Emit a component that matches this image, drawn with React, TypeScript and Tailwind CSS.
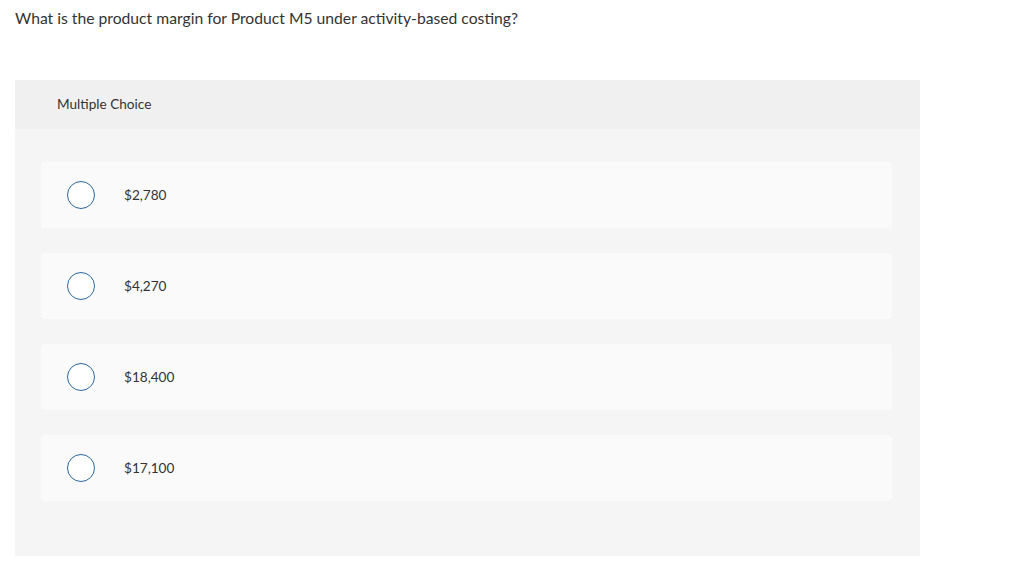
const options = ["$2,780", "$4,270", "$18,400", "$17,100"];

export default function App() {
  return (
    <div className="w-[1012px] h-[584px] bg-white font-['Lato','Open_Sans',sans-serif] text-[#333]">
      <div className="pl-[15px] pt-[8px] text-[15.7px] leading-[20px]">
        What is the product margin for Product M5 under activity-based costing?
      </div>

      <div className="ml-[15px] mt-[52px] w-[905px] h-[476px] bg-[#f5f5f5]">
        <div className="h-[49px] bg-[#f0f0f0] pl-[42px] flex items-center text-[13.6px]">
          Multiple Choice
        </div>
        <div className="pt-[33px] pl-[26px] pr-[28px] flex flex-col gap-[25px]">
          {options.map((opt) => (
            <div
              key={opt}
              className="h-[66px] bg-[#fafafa] rounded-[4px] flex items-center pl-[26px]"
            >
              <span className="w-[28px] h-[28px] rounded-full border border-[#2a65a0] bg-white shrink-0" />
              <span className="ml-[29px] text-[13.6px]">{opt}</span>
            </div>
          ))}
        </div>
      </div>
    </div>
  );
}
